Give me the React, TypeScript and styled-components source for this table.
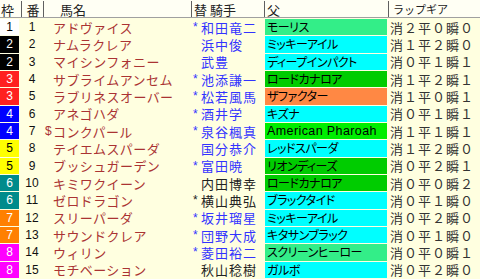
import styled, { createGlobalStyle } from "styled-components";

const GlobalStyle = createGlobalStyle`
  html, body {
    margin: 0;
    padding: 0;
    background: #ffffe0;
  }
  body {
    font-family: "Noto Sans CJK JP", "Liberation Sans", sans-serif;
  }
`;

const COLS = "21px 22px 148px 73px 124px 92px";

const frameColors: Record<number, { bg: string; fg: string }> = {
  1: { bg: "#ffffff", fg: "#000000" },
  2: { bg: "#000000", fg: "#ffffff" },
  3: { bg: "#ff2020", fg: "#ffffff" },
  4: { bg: "#0000ff", fg: "#ffffff" },
  5: { bg: "#ffff00", fg: "#000000" },
  6: { bg: "#008b8b", fg: "#ffffff" },
  7: { bg: "#ff8000", fg: "#ffffff" },
  8: { bg: "#ff00ff", fg: "#ffffff" },
};

const sireColors = {
  mint: "#33ee88",
  cyan: "#00ffff",
  green: "#00cc00",
  lime: "#00ee00",
  orange: "#ff8844",
};

type Horse = {
  waku: number;
  no: number;
  mark?: string;
  name: string;
  jockey: string;
  change?: boolean;
  jockeyBlack?: boolean;
  sire: string;
  sireBg: keyof typeof sireColors;
  gear: string;
};

const horses: Horse[] = [
  { waku: 1, no: 1, name: "アドヴァイス", jockey: "和田竜二", change: true, sire: "モーリス", sireBg: "mint", gear: "消２平０瞬０" },
  { waku: 2, no: 2, name: "ナムラクレア", jockey: "浜中俊", sire: "ミッキーアイル", sireBg: "cyan", gear: "消１平２瞬０" },
  { waku: 2, no: 3, name: "マイシンフォニー", jockey: "武豊", sire: "ディープインパクト", sireBg: "cyan", gear: "消０平１瞬１" },
  { waku: 3, no: 4, name: "サブライムアンセム", jockey: "池添謙一", change: true, sire: "ロードカナロア", sireBg: "green", gear: "消１平２瞬１" },
  { waku: 3, no: 5, name: "ラブリネスオーバー", jockey: "松若風馬", change: true, sire: "ザファクター", sireBg: "orange", gear: "消１平０瞬１" },
  { waku: 4, no: 6, name: "アネゴハダ", jockey: "酒井学", change: true, sire: "キズナ", sireBg: "cyan", gear: "消０平１瞬１" },
  { waku: 4, no: 7, mark: "$", name: "コンクパール", jockey: "泉谷楓真", change: true, sire: "American Pharoah", sireBg: "lime", gear: "消１平１瞬１" },
  { waku: 5, no: 8, name: "テイエムスパーダ", jockey: "国分恭介", sire: "レッドスパーダ", sireBg: "cyan", gear: "消１平２瞬０" },
  { waku: 5, no: 9, name: "ブッシュガーデン", jockey: "富田暁", change: true, sire: "リオンディーズ", sireBg: "green", gear: "消０平２瞬１" },
  { waku: 6, no: 10, name: "キミワクイーン", jockey: "内田博幸", jockeyBlack: true, sire: "ロードカナロア", sireBg: "green", gear: "消０平０瞬２" },
  { waku: 6, no: 11, name: "ゼロドラゴン", jockey: "横山典弘", change: true, jockeyBlack: true, sire: "ブラックタイド", sireBg: "cyan", gear: "消０平１瞬０" },
  { waku: 7, no: 12, name: "スリーパーダ", jockey: "坂井瑠星", change: true, sire: "ミッキーアイル", sireBg: "cyan", gear: "消０平２瞬０" },
  { waku: 7, no: 13, name: "サウンドクレア", jockey: "団野大成", change: true, sire: "キタサンブラック", sireBg: "cyan", gear: "消０平１瞬０" },
  { waku: 8, no: 14, name: "ウィリン", jockey: "菱田裕二", change: true, sire: "スクリーンヒーロー", sireBg: "mint", gear: "消０平０瞬１" },
  { waku: 8, no: 15, name: "モチベーション", jockey: "秋山稔樹", jockeyBlack: true, sire: "ガルボ", sireBg: "cyan", gear: "消０平２瞬０" },
];

export default function App() {
  return (
    <>
      <GlobalStyle />
      <Board>
        <Header>
          <HeadCell>枠</HeadCell>
          <HeadCell $sep center>番</HeadCell>
          <HeadCell $sep pad={16}>馬名</HeadCell>
          <HeadCell $sep pad={2}>替&nbsp;騎手</HeadCell>
          <HeadCell $sep pad={2}>父</HeadCell>
          <HeadCell $sep pad={4} small>ラップギア</HeadCell>
        </Header>
        <Body>
          {horses.map((h) => (
            <Row key={h.no}>
              <Waku bg={frameColors[h.waku].bg} fg={frameColors[h.waku].fg}>
                {h.waku}
              </Waku>
              <Umaban>{h.no}</Umaban>
              <HorseName>
                <Mark>{h.mark ?? ""}</Mark>
                {h.name}
              </HorseName>
              <Jockey black={h.jockeyBlack}>
                <Mark>{h.change ? "*" : ""}</Mark>
                {h.jockey}
              </Jockey>
              <Sire bg={sireColors[h.sireBg]} latin={/^[A-Za-z]/.test(h.sire)}>
                {h.sire}
              </Sire>
              <Gear>{h.gear}</Gear>
            </Row>
          ))}
        </Body>
      </Board>
    </>
  );
}

const Board = styled.div`
  width: 480px;
  height: 279px;
  display: flex;
  flex-direction: column;
  background: #ffffe0;
  overflow: hidden;
`;

const Header = styled.div`
  display: grid;
  grid-template-columns: ${COLS};
  height: 17px;
  border-bottom: 1px solid #a0a0a0;
  background: #fffff4;
  margin-bottom: 1px;
`;

const HeadCell = styled.div<{ $sep?: boolean; center?: boolean; pad?: number; small?: boolean }>`
  display: flex;
  align-items: center;
  justify-content: ${(p) => (p.center ? "center" : "flex-start")};
  padding-left: ${(p) => p.pad ?? 1}px;
  margin-top: 1px;
  border-left: ${(p) => (p.$sep ? "1px solid #606060" : "none")};
  font-size: ${(p) => (p.small ? "11px" : "13px")};
  color: #222;
  white-space: nowrap;
  line-height: 1;
`;

const Body = styled.div`
  flex: 1;
  display: grid;
  grid-template-rows: repeat(15, 1fr);
`;

const Row = styled.div`
  display: grid;
  grid-template-columns: ${COLS};
  padding-bottom: 1px;
  min-height: 0;
  align-items: stretch;
`;

const Waku = styled.div<{ bg: string; fg: string }>`
  width: 19px;
  background: ${(p) => p.bg};
  color: ${(p) => p.fg};
  font-family: "Liberation Sans", sans-serif;
  font-size: 12px;
  display: flex;
  align-items: center;
  justify-content: center;
`;

const Umaban = styled.div`
  font-family: "Liberation Sans", sans-serif;
  font-size: 12px;
  color: #111;
  display: flex;
  align-items: center;
  justify-content: center;
`;

const Mark = styled.span`
  display: inline-block;
  width: 8px;
  font-family: "Liberation Sans", sans-serif;
  font-size: 12px;
  letter-spacing: 0;
`;

const HorseName = styled.div`
  padding-left: 2px;
  display: flex;
  align-items: center;
  font-size: 13px;
  letter-spacing: 0.4px;
  color: #a33;
  white-space: nowrap;
  line-height: 1;
`;

const Jockey = styled.div<{ black?: boolean }>`
  padding-left: 2px;
  display: flex;
  align-items: center;
  font-size: 13px;
  letter-spacing: 1px;
  color: ${(p) => (p.black ? "#222" : "#3333ff")};
  white-space: nowrap;
  line-height: 1;
`;

const Sire = styled.div<{ bg: string; latin?: boolean }>`
  margin: 0 1px;
  padding-left: 2px;
  background: ${(p) => p.bg};
  display: flex;
  align-items: center;
  font-family: ${(p) =>
    p.latin ? `"Liberation Sans", sans-serif` : `"Noto Sans CJK JP", sans-serif`};
  font-size: ${(p) => (p.latin ? "12.5px" : "12px")};
  font-feature-settings: "palt";
  letter-spacing: ${(p) => (p.latin ? "0.4px" : "-0.5px")};
  color: #000;
  white-space: nowrap;
  overflow: hidden;
  line-height: 1;
`;

const Gear = styled.div`
  padding-left: 2px;
  display: flex;
  align-items: center;
  font-size: 13px;
  letter-spacing: 1px;
  color: #333;
  white-space: nowrap;
  line-height: 1;
`;
